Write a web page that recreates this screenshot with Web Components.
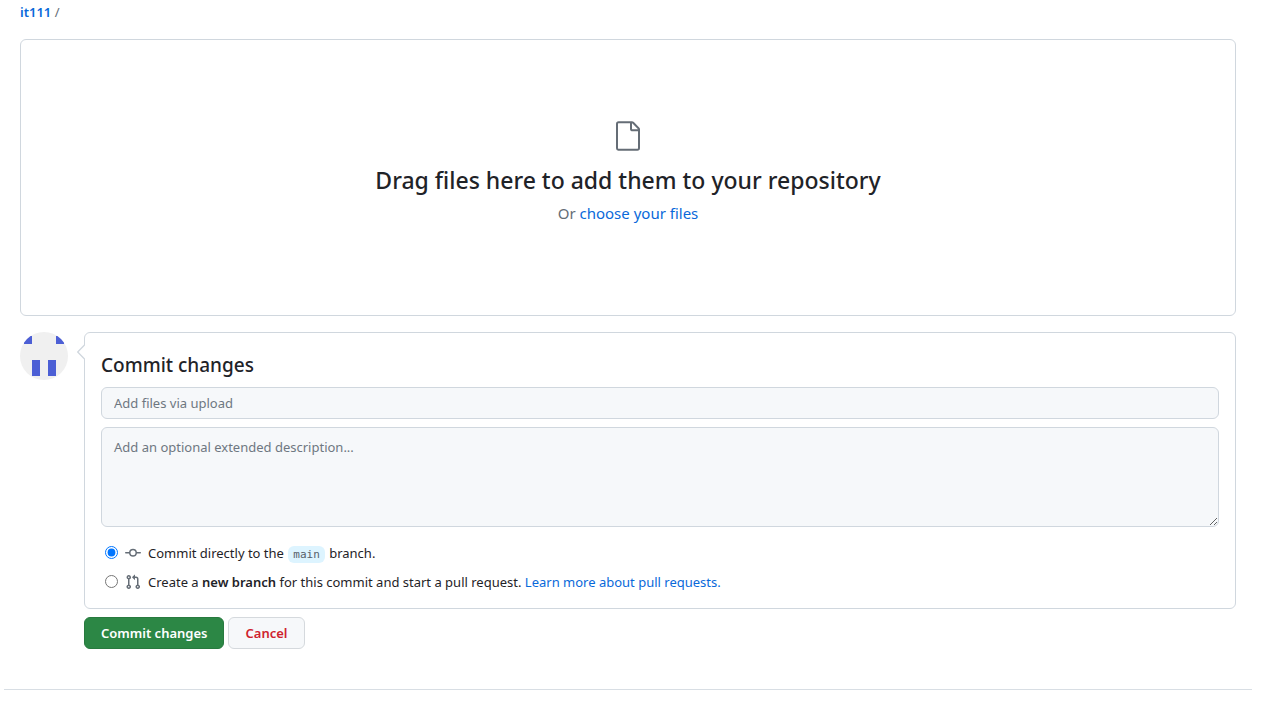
<!DOCTYPE html>
<html lang="en">
<head>
<meta charset="utf-8">
<title>Upload files</title>
<style>
  body {
    margin: 0;
    background: #fff;
    color: #1f2328;
    font: 13px/20px "Noto Sans", "Open Sans", sans-serif;
  }
</style>
</head>
<body>
<upload-page>
  <path-crumb slot="crumb" name="it111"></path-crumb>
  <file-drop></file-drop>
  <commit-form></commit-form>
</upload-page>

<template id="upload-page">
  <style>
    :host { display: block; margin: 0 32px 0 4px; }
    main { padding: 2px 16px 40px; display: flex; flex-direction: column; gap: 16px; }
    footer { border-top: 1px solid #d8dee4; }
  </style>
  <main><slot name="crumb"></slot><slot></slot></main>
  <footer></footer>
</template>

<template id="path-crumb">
  <style>
    :host { display: block; height: 21px; color: #656d76; }
    a { color: #0969da; font-weight: 600; text-decoration: none; }
  </style>
  <nav aria-label="Path"><a href="#"></a> /</nav>
</template>

<template id="file-drop">
  <style>
    :host {
      display: flex; flex-direction: column; align-items: center;
      padding: 80px 16px 90px; border: 1px solid #d0d7de; border-radius: 6px;
      text-align: center; color: #656d76; font-size: 15px; line-height: 24px;
    }
    svg { display: block; fill: #656d76; }
    h1 { margin: 10px 0 3px; color: #1f2328; font-size: 23px; line-height: 36px; font-weight: 500; }
    p { margin: 0; }
    a { color: #0969da; text-decoration: none; }
  </style>
  <svg width="32" height="32" viewBox="0 0 24 24" aria-hidden="true"><path d="M3 3a2 2 0 0 1 2-2h9.982a2 2 0 0 1 1.414.586l4.018 4.018A2 2 0 0 1 21 7.018V21a2 2 0 0 1-2 2H4.750A1.750 1.750 0 0 1 3 21.250Zm1.750-.5a.25.25 0 0 0-.25.25v18.500c0 .138.112.25.25.25h14.500a.25.25 0 0 0 .25-.25V8.500h-4a2 2 0 0 1-2-2v-4Zm10.250 0v4a.5.5 0 0 0 .5.5h4a.5.5 0 0 0-.146-.336l-4.018-4.018A.5.5 0 0 0 15 2.500Z"/></svg>
  <h1>Drag files here to add them to your repository</h1>
  <p>Or <a href="#">choose your files</a></p>
</template>

<template id="user-avatar">
  <style>
    :host { display: block; flex: none; width: 48px; height: 48px; border-radius: 50%; overflow: hidden; background: #f0f0f0; }
    svg { display: block; }
  </style>
  <svg width="48" height="48" viewBox="0 0 48 48" role="img" aria-label="User avatar"><path fill="#4c5fd5" d="M4 4h8v8H4zM36 4h8v8h-8zM12 28h8v16h-8zM28 28h8v16h-8z"/></svg>
</template>

<template id="bubble-box">
  <style>
    :host { display: block; position: relative; padding: 16px; border: 1px solid #d0d7de; border-radius: 6px; }
    .tail { position: absolute; left: -8px; top: 11px; }
  </style>
  <svg class="tail" width="9" height="16" viewBox="0 0 9 16" aria-hidden="true"><path d="M8 1v14L1 8Z" fill="#fff"/><path d="M7.500 1 .700 8l6.800 7" fill="none" stroke="#d0d7de" stroke-width="1.300"/></svg>
  <slot></slot>
</template>

<template id="commit-form">
  <style>
    :host { display: block; }
    form { display: grid; grid-template-columns: 48px minmax(0, 1fr); gap: 8px 16px; margin: 0; }
    h2 { margin: 2px 0 8px; font-size: 19px; line-height: 28px; font-weight: 500; }
    input[type="text"], textarea {
      display: block; box-sizing: border-box; width: 100%; margin: 0; padding: 5px 12px;
      border: 1px solid #d0d7de; border-radius: 6px; background: #f6f8fa;
      color: #1f2328; font: inherit;
    }
    input[type="text"] { height: 32px; }
    textarea { height: 100px; margin-top: 8px; padding-top: 9px; resize: vertical; }
    ::placeholder { color: #6e7781; opacity: 1; }
    branch-choices { margin-top: 16px; }
    .actions { grid-column: 2; display: flex; gap: 4px; }
  </style>
  <form>
    <user-avatar></user-avatar>
    <bubble-box>
      <h2>Commit changes</h2>
      <input type="text" aria-label="Commit message" placeholder="Add files via upload">
      <textarea aria-label="Extended description" placeholder="Add an optional extended description..."></textarea>
      <branch-choices></branch-choices>
    </bubble-box>
    <div class="actions">
      <action-button variant="primary">Commit changes</action-button>
      <action-button variant="danger">Cancel</action-button>
    </div>
  </form>
</template>

<template id="branch-choices">
  <style>
    :host { display: grid; gap: 9px; }
    .row { display: flex; align-items: center; height: 20px; }
    input { flex: none; width: 13px; height: 13px; margin: 0 7px 2px 4px; }
    svg { flex: none; margin-right: 7px; fill: #656d76; }
    code {
      padding: 2px 5px; margin: 0 1px; border-radius: 6px; background: #ddf4ff;
      color: #57606a; font: 11px/14px "DejaVu Sans Mono", monospace;
    }
    b { font-weight: 600; }
    a { color: #0969da; text-decoration: none; }
  </style>
  <div class="row">
    <input type="radio" name="target" id="direct" checked>
    <svg width="16" height="16" viewBox="0 0 16 16" aria-hidden="true"><path d="M11.930 8.500a4.002 4.002 0 0 1-7.860 0H.750a.75.75 0 0 1 0-1.500h3.320a4.002 4.002 0 0 1 7.860 0h3.320a.75.75 0 0 1 0 1.500Zm-1.430-.750a2.500 2.500 0 1 0-5 0 2.500 2.500 0 0 0 5 0Z"/></svg>
    <label for="direct">Commit directly to the <code>main</code> branch.</label>
  </div>
  <div class="row">
    <input type="radio" name="target" id="fresh">
    <svg width="16" height="16" viewBox="0 0 16 16" aria-hidden="true"><path d="M1.500 3.250a2.250 2.250 0 1 1 3 2.122v5.256a2.251 2.251 0 1 1-1.500 0V5.372A2.250 2.250 0 0 1 1.500 3.250Zm5.677-.177L9.573.677A.25.25 0 0 1 10 .854V2.500h1A2.500 2.500 0 0 1 13.500 5v5.628a2.251 2.251 0 1 1-1.500 0V5a1 1 0 0 0-1-1h-1v1.646a.25.25 0 0 1-.427.177L7.177 3.427a.25.25 0 0 1 0-.354ZM3.750 2.500a.75.75 0 1 0 0 1.500.75.75 0 0 0 0-1.500Zm0 9.500a.75.75 0 1 0 0 1.500.75.75 0 0 0 0-1.500Zm8.250.750a.75.75 0 1 0 1.500 0 .75.75 0 0 0-1.500 0Z"/></svg>
    <label for="fresh">Create a <b>new branch</b> for this commit and start a pull request. <a href="#">Learn more about pull requests.</a></label>
  </div>
</template>

<template id="action-button">
  <style>
    :host { display: block; }
    button {
      height: 32px; padding: 0 16px; border: 1px solid #d5d9dd; border-radius: 6px;
      background: #f6f8fa; color: #cf222e; font: inherit; font-weight: 600; cursor: pointer;
    }
    :host([variant="primary"]) button { background: #2c8745; border-color: #287a3f; color: #fff; }
  </style>
  <button type="button"><slot></slot></button>
</template>

<script>
  class TemplateElement extends HTMLElement {
    constructor() {
      super();
      const source = document.getElementById(this.localName);
      this.attachShadow({ mode: "open" }).append(source.content.cloneNode(true));
    }
  }
  class PathCrumb extends TemplateElement {
    connectedCallback() {
      this.shadowRoot.querySelector("a").textContent = this.getAttribute("name");
    }
  }
  customElements.define("path-crumb", PathCrumb);
  for (const name of ["action-button", "branch-choices", "user-avatar", "bubble-box", "file-drop", "commit-form", "upload-page"]) {
    customElements.define(name, class extends TemplateElement {});
  }
</script>
</body>
</html>
